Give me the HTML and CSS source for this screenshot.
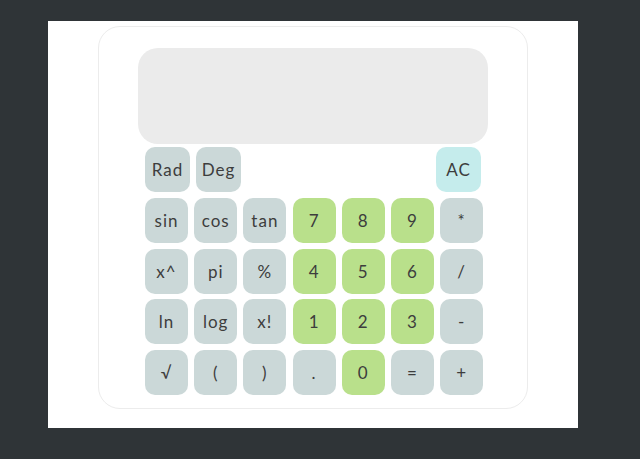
FILE: index.html
```html
<!DOCTYPE html>
<html lang="en">
<head>
    <meta charset="UTF-8">
    <meta name="viewport" content="width=device-width, initial-scale=1.0">
    <title>Calculator</title>
    <link rel="stylesheet" href="styles.css">
</head>
<body>
    <div class="page">
        <div class="calculator">
            <div class="display"></div>
            <div class="top-row">
                <button class="key">Rad</button>
                <button class="key">Deg</button>
                <button class="key clear">AC</button>
            </div>
            <div class="keys">
                <button class="key">sin</button>
                <button class="key">cos</button>
                <button class="key">tan</button>
                <button class="key num">7</button>
                <button class="key num">8</button>
                <button class="key num">9</button>
                <button class="key">*</button>

                <button class="key">x^</button>
                <button class="key">pi</button>
                <button class="key">%</button>
                <button class="key num">4</button>
                <button class="key num">5</button>
                <button class="key num">6</button>
                <button class="key">/</button>

                <button class="key">ln</button>
                <button class="key">log</button>
                <button class="key">x!</button>
                <button class="key num">1</button>
                <button class="key num">2</button>
                <button class="key num">3</button>
                <button class="key">-</button>

                <button class="key">&radic;</button>
                <button class="key">(</button>
                <button class="key">)</button>
                <button class="key">.</button>
                <button class="key num">0</button>
                <button class="key">=</button>
                <button class="key">+</button>
            </div>
        </div>
    </div>
</body>
</html>
```

FILE: styles.css
```css
body {
    margin: 0;
    padding: 21px 0 0 48px;
    background-color: #2f3437;
    font-family: "Lato", "Open Sans", sans-serif;
    height: 459px;
    box-sizing: border-box;
}

.page {
    width: 530px;
    height: 407px;
    background-color: #fff;
    padding: 5px 50px 0;
    box-sizing: border-box;
}

.calculator {
    width: 430px;
    height: 383px;
    border: 1px solid #ececec;
    border-radius: 22px;
    padding: 21px 39px 0;
    box-sizing: border-box;
}

.display {
    height: 96px;
    background-color: #ebebeb;
    border-radius: 20px;
    margin-bottom: 3px;
}

.top-row {
    display: flex;
    gap: 6px;
    padding: 0 7px;
    margin-bottom: 6px;
}

.top-row .key {
    width: 45px;
}

.top-row .clear {
    margin-left: auto;
}

.keys {
    display: grid;
    grid-template-columns: repeat(7, 43px);
    grid-auto-rows: 45px;
    column-gap: 6.2px;
    row-gap: 5.6px;
    padding: 0 7px;
}

.key {
    height: 45px;
    border: none;
    border-radius: 10px;
    background-color: #cbd8d8;
    color: #3d3d3d;
    font-family: inherit;
    font-size: 17px;
    letter-spacing: 1px;
    padding: 0;
    cursor: pointer;
}

.key.num {
    background-color: #b9e08b;
}

.key.clear {
    background-color: #c5ecec;
}
```
